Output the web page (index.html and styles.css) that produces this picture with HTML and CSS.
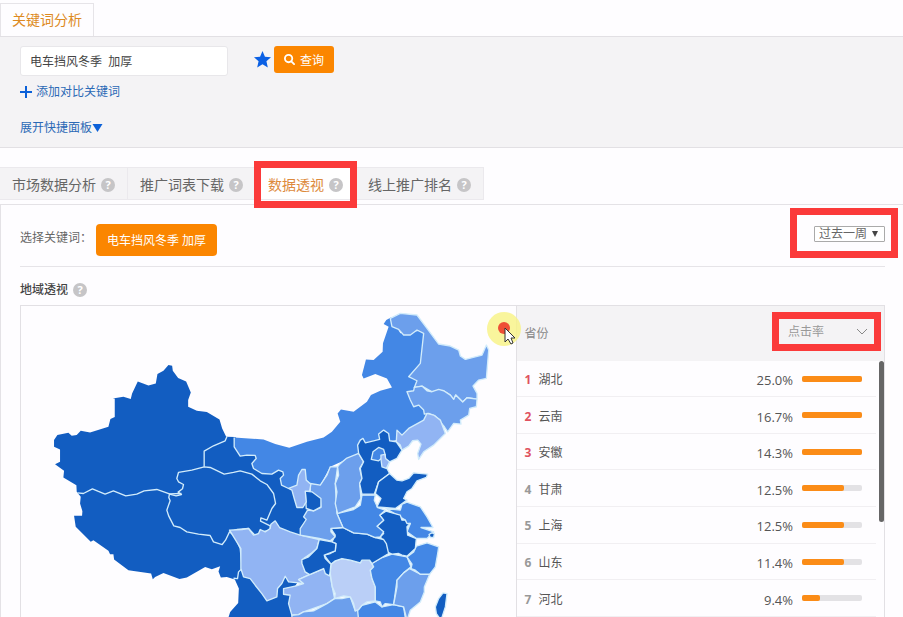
FILE: index.html
```
<!DOCTYPE html>
<html lang="zh-CN">
<head>
    <meta charset="UTF-8">
    <meta name="viewport" content="width=device-width, initial-scale=1.0">
    <title>关键词分析</title>
    <link rel="stylesheet" href="styles.css">
</head>
<body>

    <!-- Keyword search -->
    <header class="top-tabs">
        <a class="top-tab" href="#">关键词分析</a>
    </header>
    <form class="search-panel">
        <div class="search-row">
            <input class="search-input" type="text" aria-label="关键词" value="电车挡风冬季  加厚">
            <div class="search-actions">
                <svg class="star" viewBox="0 0 16 16"><path d="M8 0l2.3 5.4 5.7.5-4.300 3.800 1.300 5.800L8 12.500 3 15.500l1.300-5.800L0 5.900l5.700-.5z" fill="#0b60e4"/></svg>
                <button class="search-btn" type="submit">
                    <svg class="search-icon" viewBox="0 0 12 12"><circle cx="5" cy="5" r="4" fill="none" stroke="#fff" stroke-width="2"/><path d="M8 8l3 3" stroke="#fff" stroke-width="2" stroke-linecap="round"/></svg>
                    查询
                </button>
            </div>
        </div>
        <a class="panel-link" href="#">
            <svg class="plus" viewBox="0 0 12 12"><path d="M6 0v12M0 6h12" stroke="#0b60d8" stroke-width="2"/></svg>
            添加对比关键词
        </a>
        <a class="panel-link expand" href="#">展开快捷面板<svg class="caret" viewBox="0 0 10 8"><path d="M0 0h10L5 8z" fill="#0b60d8"/></svg></a>
    </form>

    <!-- Section tabs -->
    <nav class="tabs">
        <a class="tab" href="#">市场数据分析<span class="help">?</span></a>
        <a class="tab" href="#">推广词表下载<span class="help">?</span></a>
        <a class="tab active" href="#">数据透视<span class="help">?</span></a>
        <a class="tab" href="#">线上推广排名<span class="help">?</span></a>
    </nav>

    <main class="content">
        <div class="filter-row">
            <span class="filter-label">选择关键词：</span>
            <button class="keyword-btn" type="button">电车挡风冬季 加厚</button>
            <div class="period">
                <select class="period-select" aria-label="时间范围">
                    <option>过去一周</option>
                </select>
                <svg class="period-arrow" viewBox="0 0 6 6"><path d="M0 0h6L3 6z" fill="#444"/></svg>
            </div>
        </div>

        <h2 class="section-title">地域透视<span class="help">?</span></h2>

        <div class="region-box">
            <div class="map">
                <svg class="china" viewBox="-597 -342 1485 933" role="img" aria-label="地域透视">
                    <!-- west: Xinjiang, Tibet, Qinghai, Gansu, Yunnan -->
                    <g transform="translate(-540 -210)">
                        <path class="c1 base" d="M385 45L396 47 398 62 414 84 438 94 452 127 444 150 444 170 470 182 500 186 538 208 546 235 558 260 584 261 640 300 740 360 800 400 840 510 790 620 770 700 755 720 760 801H565L570 785 594 758 596 715 584 688 560 680 542 682 535 664 540 648 515 657 495 650 440 682 418 686 370 668 345 680 338 687 333 670 265 660 222 628 220 612 210 612 205 602 160 570 152 575 107 530 102 497 126 497 127 483 120 460 122 440 110 425 109 405 70 382 72 362 45 342 60 335 60 298 42 290 42 270 52 255 85 248 95 257 110 255 122 242 150 247 205 230 211 207 224 201 224 146 218 145 250 140 272 147 276 130 293 94 325 106 347 100 352 72 370 62Z"/>
                        <path class="line" d="M112 428L130 430 157 416 175 424 195 432 220 422 257 437 290 432 312 422 350 418 388 431 424 430M492 350L492 303 520 287 555 272 560 260M568 545L585 560 600 595 606 655 595 665 592 685 580 684"/>
                        <path class="line" d="M492 350L455 360 415 367 410 385 415 395 430 403 427 416 414 426 424 433 408 437 388 432 386 442 390 452 380 480 386 498 401 527 420 532 440 545 475 552 510 556 520 575 546 583 556 570 568 545 590 538 625 535 645 556 665 545 690 540 690 527 661 513 662 503 680 510 695 475 706 460 700 430 680 403 660 392 635 372 600 362 580 367 552 372 510 352Z"/>
                    </g>
                    <!-- Inner Mongolia -->
                    <path class="c2 base" d="M42 52L130 58 165 72 207 83 260 65 310 52 335 35 360 5 352-20 362-32 400-25 440-55 452-75 480-88 515-98 500-125 465-138 430-125 425-135 437-182 460-180 487-205 488-230 505-280 490-288 498-300 513-308 540-260 620-270 610-100 640-20 530 60 505 65 440 100 378 118 330 140 300 195 270 190 250 170 235 200 205 205 184 195 180 175 190 165 188 155 175 150 155 162 125 160 100 145 95 130 108 115 105 106 60 108 42 80Z"/>
                    <path class="line" d="M42 52L42 80 60 108 80 105 105 106 108 115 95 130 100 145 125 160 155 162 175 150 188 155 190 165 180 175 184 195 205 205"/>
                    <!-- north-east -->
                    <g transform="translate(0 -360)">
                        <path class="c3" d="M510 55L540 40 590 45 620 85 655 132 690 138 715 150 720 168 735 178 785 165 798 135 805 150 798 235 775 240 758 258 770 280 770 297 740 293 727 306 706 285 700 298 690 285 670 272 635 275 605 258 582 262 590 242 565 230 600 190 610 100 590 90 570 105 550 105 535 88 515 80Z"/>
                        <path class="c3" d="M560 275L580 272 582 262 605 258 620 272 635 275 655 268 670 272 690 285 700 298 706 285 727 306 740 293 770 297 768 320 748 325 745 345 720 360 722 372 700 370 682 395 672 380 645 348 625 340 612 342 610 330 595 315 580 320 570 300Z"/>
                    </g>
                    <path class="c4" d="M545 90L540 75 528 65 530 30 545 45 565 25 610 0 620-20 640-15 660 0 675 40 640 75 610 95 595 118 592 100 602 72 592 60 577 62 565 78Z"/>

                    <!-- south-west -->
                    <path class="c4" d="M28 330L65 328 85 325 100 345 115 340 120 328 135 335 150 325 152 312 165 302 178 322 210 335 240 345 297 358 290 385 275 398 250 415 245 425 255 455 268 463 235 478 250 490 228 487 205 485 195 468 185 490 172 505 170 530 140 542 125 520 105 495 90 475 70 470 62 445 62 385Z"/>
                    <path class="c4" d="M190 505L228 497 250 490 235 478 268 463 310 445 330 465 336 500 343 535 320 550 250 575 235 583 215 585 205 550 210 525 190 522Z"/>
                    <path class="c3" d="M215 585L235 583 250 575 280 572 320 550 343 535 365 535 390 530 405 572 415 568 415 600H215Z"/>
                    <path class="c2" d="M412 570L425 555 465 545 485 560 520 553 550 560 556 600H415Z"/>

                    <!-- centre and coast -->
                    <path class="c5" d="M332 432L345 422 365 415 390 420 420 428 425 420 448 420 460 440 450 450 455 475 465 500 465 542 440 545 425 555 415 568 405 572 400 550 390 530 370 527 343 535 345 520 336 500 330 460Z"/>
                    <path class="c2" d="M455 430L485 412 515 402 560 410 572 440 550 458 530 480 520 553 495 550 485 560 480 545 465 542 465 500 455 475 450 450 460 440Z"/>
                    <path class="c3" d="M568 445L600 462 628 462 612 500 612 515 600 545 570 570 560 600 550 560 520 553 530 500 530 480 550 458Z"/>
                    <path class="c2" d="M588 378L620 368 655 380 652 400 645 440 628 462 600 462 585 450 572 445 575 432 560 410 580 395Z"/>
                    <path class="c2" d="M497 265L540 270 545 252 560 246 600 260 620 290 638 322 602 322 640 335 620 355 588 355 560 335 570 310 558 312 555 300 530 285Z"/>
                    <path class="c1" d="M470 318L490 300 478 285 497 273 540 285 545 300 555 300 560 310 570 310 560 320 562 345 588 355 585 385 560 408 545 405 535 400 515 402 500 395 495 370 480 350 490 340Z"/>
                    <path class="c1" d="M626 343L634 338 642 340 640 352 630 352Z"/>
                    <path class="c1" d="M332 325L368 322 400 338 440 342 465 352 490 358 498 370 505 400 485 412 455 430 448 420 425 420 420 428 390 420 365 415 345 422 332 432 312 405 330 400 345 392 347 370 335 365 345 345Z"/>
                    <path class="c1" d="M297 358L335 365 347 370 345 392 312 405 315 415 332 432 328 467 315 460 310 445 268 463 255 455 245 430 245 418 265 410 290 385Z"/>
                    <path class="c2" d="M350 280L400 268 420 255 425 225 465 225 462 240 472 262 495 270 478 285 490 300 470 318 490 335 480 350 465 352 440 342 400 338 368 322Z"/>
                    <path class="c3" d="M352 140L330 140 320 165 300 195 270 190 270 215 300 235 302 262 280 272 262 270 250 290 258 298 240 325 240 345 297 355 320 360 330 362 345 350 332 335 332 325 368 322 350 280 345 190Z"/>
                    <path class="c1" d="M255 213L275 215 302 235 302 260 280 272 258 265Z"/>
                    <path class="c4" d="M205 205L230 195 235 165 245 148 255 148 258 180 272 192 268 213 255 213 258 245 248 262 230 262 222 235 215 210Z"/>
                    <path class="c3" d="M352 140L358 132 378 115 415 100 430 125 418 145 425 175 418 190 422 235 405 260 352 280 345 250 350 215 345 190 355 165Z"/>
                    <path class="c1" d="M420 60L428 55 435 68 460 62 478 58 475 42 490 30 505 40 508 62 528 65 545 90 530 115 508 125 500 145 508 160 475 185 462 222 425 222 418 190 425 175 420 145 430 125 415 100 412 75Z"/>
                    <path class="c2" d="M458 95L475 82 490 88 495 105 475 122 453 118Z"/>
                    <path class="c4" d="M482 118L482 105 494 103 496 115 508 125 498 145 485 140Z"/>
                    <path class="c1" d="M475 185L508 160 530 180 545 182 565 175 580 158 622 162 618 172 590 182 575 205 560 215 550 235 560 240 525 265 490 262 470 260 482 235 465 220Z"/>
                    <path class="c1" d="M668 518L680 520 675 560 662 600 648 580 645 560 655 535Z"/>
                </svg>
            </div>

            <div class="rank">
                <div class="rank-head">
                    <span>省份</span>
                    <div class="metric">
                        <select class="metric-select" aria-label="指标">
                            <option>点击率</option>
                        </select>
                        <svg class="metric-arrow" viewBox="0 0 12 8"><path d="M1 1l5 5 5-5" fill="none" stroke="#888"/></svg>
                    </div>
                </div>
                <div class="rank-body">
                    <table class="rank-table">
                        <tbody>
                            <tr class="hot"><td class="no">1</td><td>湖北</td><td class="rate">25.0%</td><td class="bar-cell"><div class="bar"><div class="fill" style="width: 100%"></div></div></td></tr>
                            <tr class="hot"><td class="no">2</td><td>云南</td><td class="rate">16.7%</td><td class="bar-cell"><div class="bar"><div class="fill" style="width: 100%"></div></div></td></tr>
                            <tr class="hot"><td class="no">3</td><td>安徽</td><td class="rate">14.3%</td><td class="bar-cell"><div class="bar"><div class="fill" style="width: 100%"></div></div></td></tr>
                            <tr><td class="no">4</td><td>甘肃</td><td class="rate">12.5%</td><td class="bar-cell"><div class="bar"><div class="fill" style="width: 70%"></div></div></td></tr>
                            <tr><td class="no">5</td><td>上海</td><td class="rate">12.5%</td><td class="bar-cell"><div class="bar"><div class="fill" style="width: 70%"></div></div></td></tr>
                            <tr><td class="no">6</td><td>山东</td><td class="rate">11.4%</td><td class="bar-cell"><div class="bar"><div class="fill" style="width: 70%"></div></div></td></tr>
                            <tr><td class="no">7</td><td>河北</td><td class="rate">9.4%</td><td class="bar-cell"><div class="bar"><div class="fill" style="width: 30%"></div></div></td></tr>
                        </tbody>
                    </table>
                    <div class="scroll-thumb"></div>
                </div>
                <svg class="pointer" viewBox="0 0 36 36">
                    <circle cx="18" cy="18" r="17" fill="#f7f283" fill-opacity=".8"/>
                    <circle cx="18" cy="17" r="6" fill="#ee4f35"/>
                    <path d="M19 17v14l3-3 3 5 2-1-2-5h4z" fill="#fff" stroke="#333"/>
                </svg>
            </div>
        </div>
    </main>

</body>
</html>
```
FILE: styles.css
```
* {
    box-sizing: border-box;
}
body {
    margin: 0;
    padding-top: 3px;
    background-color: #fefdff;
    font-family: "Open Sans", "Noto Sans CJK SC", sans-serif;
    font-size: 12px;
    line-height: 16px;
    color: #666;
    overflow: hidden;
}
a {
    text-decoration: none;
}
button, input, select {
    font-family: inherit;
    font-size: 12px;
}
svg {
    display: block;
}

/* search */
.top-tabs {
    display: flex;
}
.top-tab {
    padding: 0 11px;
    border: 1px solid #e6e4e8;
    border-bottom: none;
    font-size: 14px;
    line-height: 32px;
    color: #dd8a22;
}
.search-panel {
    display: flex;
    flex-direction: column;
    align-items: flex-start;
    padding: 9px 20px 11px;
    background-color: #f4f3f5;
    border-top: 1px solid #e2e0e4;
    border-bottom: 1px solid #e2e0e4;
}
.search-row {
    display: flex;
    align-items: flex-start;
    gap: 26px;
}
.search-input {
    width: 208px;
    height: 30px;
    padding: 0 9px;
    border: 1px solid #e8e7ea;
    border-radius: 3px;
    background-color: #fff;
    color: #444;
    white-space: pre;
}
.search-actions {
    display: flex;
    align-items: center;
    gap: 3px;
}
.star {
    width: 17px;
    height: 17px;
}
.search-btn {
    display: flex;
    align-items: center;
    gap: 5px;
    height: 27px;
    padding: 0 10px;
    border: none;
    border-radius: 3px;
    background-color: #fb8600;
    color: #fff;
}
.search-icon {
    width: 11px;
    height: 11px;
}
.panel-link {
    display: flex;
    align-items: center;
    gap: 4px;
    margin-top: 8px;
    color: #2b69b5;
}
.expand {
    gap: 0;
    margin-top: 20px;
}
.plus {
    width: 12px;
    height: 12px;
}
.caret {
    width: 11px;
    height: 8px;
}

/* tabs */
.tabs {
    display: flex;
    margin-top: 19px;
    margin-bottom: 4px;
}
.tab {
    position: relative;
    display: flex;
    align-items: center;
    gap: 5px;
    height: 33px;
    padding: 3px 12px 0;
    border: 1px solid #ebe9ed;
    border-left: none;
    background-color: #f4f3f5;
    font-size: 14px;
    color: #666;
}
.tab.active {
    background-color: #fff;
    color: #dd8a3c;
}
.help {
    width: 14px;
    height: 14px;
    border-radius: 50%;
    background-color: #c6c5c7;
    color: #fff;
    font-size: 11px;
    font-weight: bold;
    line-height: 14px;
    text-align: center;
}

/* red frames over the highlighted controls */
.tab.active::after, .period::after, .metric::after {
    content: "";
    position: absolute;
    border: 7px solid #fb3a3a;
    pointer-events: none;
}
.tab.active::after {
    inset: -7px -2px -9px -2px;
    z-index: 1;
}
.period::after {
    inset: -18px -13px -16px -24px;
}
.metric::after {
    inset: 0;
}

/* content */
.content {
    padding: 0 18px 0 19px;
    border-top: 1px solid #e4e2e6;
    border-left: 1px solid #e4e2e6;
}
.filter-row {
    display: flex;
    align-items: center;
    height: 62px;
    padding-top: 10px;
    padding-bottom: 1px;
    border-bottom: 1px solid #e6e4e8;
}
.filter-label {
    width: 76px;
    padding-bottom: 5px;
}
.keyword-btn {
    height: 32px;
    padding: 0 11px;
    border: none;
    border-radius: 4px;
    background-color: #fb8600;
    color: #fff;
}
.period {
    position: relative;
    align-self: flex-start;
    margin-top: 11px;
    margin-left: auto;
}
.period-select {
    display: block;
    width: 71px;
    height: 16px;
    padding: 0 4px;
    border: 1px solid #aaa;
    border-radius: 1px;
    background-color: #fff;
    color: #666;
    line-height: 14px;
    appearance: none;
}
.period-arrow {
    position: absolute;
    top: 5px;
    right: 7px;
    width: 6px;
    height: 6px;
    pointer-events: none;
}
.section-title {
    display: flex;
    align-items: center;
    gap: 5px;
    height: 38px;
    margin: 0;
    padding-top: 7px;
    font-size: 12px;
    font-weight: 500;
    color: #444;
}

.region-box {
    display: grid;
    grid-template-columns: 496fr 368fr;
    border: 1px solid #e2e0e4;
    border-bottom: none;
}
.map {
    overflow: hidden;
}
.china {
    width: 100%;
}
.c1, .c2, .c3, .c4, .c5, .line {
    stroke: #d2ecfb;
    stroke-width: 4;
    stroke-linejoin: round;
}
.c1 {
    fill: #125dc1;
}
.c2 {
    fill: #4387e5;
}
.c3 {
    fill: #6c9fec;
}
.c4 {
    fill: #91b4f3;
}
.c5 {
    fill: #bacff7;
}
.base {
    stroke: none;
}
.line {
    fill: none;
}

/* ranking */
.rank {
    position: relative;
    border-left: 1px solid #e2e0e4;
}
.rank-head {
    display: flex;
    align-items: center;
    justify-content: space-between;
    height: 55px;
    padding: 0 3px 0 7px;
    background-color: #f4f3f5;
    color: #888;
}
.metric {
    position: relative;
    margin-bottom: 4px;
}
.metric-select {
    display: block;
    width: 109px;
    height: 39px;
    padding: 0 16px;
    border: none;
    background-color: transparent;
    color: #999;
    appearance: none;
}
.metric-arrow {
    position: absolute;
    top: 16px;
    right: 13px;
    width: 12px;
    height: 8px;
    pointer-events: none;
}
.rank-body {
    position: relative;
    padding-right: 8px;
}
.rank-table {
    width: 100%;
    height: 256px;
    border-collapse: collapse;
}
.rank-table td {
    padding: 3px 0 0;
    border-bottom: 1px solid #f1eff2;
    color: #555;
}
.rank-table .no {
    width: 21px;
    padding-left: 7px;
    font-weight: bold;
    color: #999;
}
.rank-table .hot .no {
    color: #e05260;
}
.rank-table .rate {
    font-size: 13px;
    text-align: right;
}
.rank-table .bar-cell {
    width: 83px;
    padding-top: 0;
    padding-left: 9px;
}
.bar {
    width: 60px;
    height: 6px;
    border-radius: 2px;
    background-color: #e3e2e5;
}
.fill {
    height: 6px;
    border-radius: 2px;
    background-color: #fb8c17;
}
.scroll-thumb {
    position: absolute;
    top: 0;
    right: 0;
    width: 5px;
    height: 161px;
    border-radius: 3px;
    background-color: #666;
}
.pointer {
    position: absolute;
    top: 5px;
    left: -31px;
    width: 36px;
    height: 36px;
}
```
